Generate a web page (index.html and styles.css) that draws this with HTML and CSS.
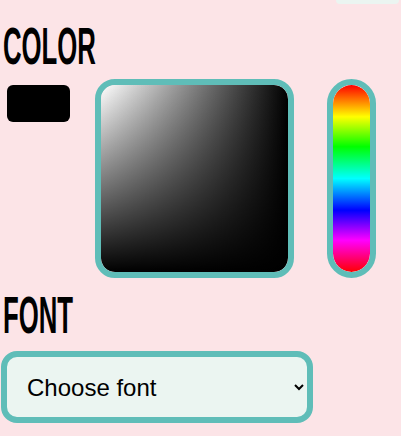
FILE: index.html
```html
<!DOCTYPE html>
<html>
<head>
<meta charset="utf-8">
<link rel="stylesheet" href="styles.css">
</head>
<body>
<div class="topbar"><div class="top-btn"></div></div>
<h2 class="heading"><span>Color</span></h2>
<div class="color-row">
  <div class="swatch"></div>
  <div class="sv-box"><div class="sv-inner"></div></div>
  <div class="hue-box"><div class="hue-inner"></div></div>
</div>
<h2 class="heading heading-font"><span>Font</span></h2>
<select class="font-select">
  <option>Choose font</option>
  <option>Arial</option>
  <option>Georgia</option>
</select>
</body>
</html>
```
FILE: styles.css
```css
html, body {
  margin: 0;
  padding: 0;
  background: #fce4e7;
  overflow: hidden;
}
body {
  font-family: "Liberation Sans", Arial, sans-serif;
}
.topbar {
  height: 4px;
  display: flex;
  justify-content: flex-end;
  padding-right: 2px;
}
.top-btn {
  width: 63px;
  height: 4px;
  background: #ebf5f1;
  border-radius: 0 0 6px 6px;
}
.heading {
  margin: 17px 0 0 3px;
  font-family: "Liberation Sans", sans-serif;
  font-weight: 700;
  font-size: 52px;
  line-height: 50px;
  height: 49px;
  text-transform: uppercase;
  color: #000;
}
.heading span {
  display: inline-block;
  transform: scaleX(0.495);
  transform-origin: left center;
}
.color-row {
  margin-top: 9px;
  display: flex;
  align-items: flex-start;
  padding-left: 7px;
}
.swatch {
  width: 63px;
  height: 37px;
  margin-top: 6px;
  background: #000;
  border-radius: 6px;
}
.sv-box {
  margin-left: 25px;
  width: 199px;
  height: 199px;
  box-sizing: border-box;
  border: 6px solid #5fbdb8;
  border-radius: 20px;
  overflow: hidden;
}
.sv-inner {
  width: 100%;
  height: 100%;
  border-radius: 14px;
  background:
    linear-gradient(to top, #000, rgba(0,0,0,0)),
    linear-gradient(to right, #fff, #000);
}
.hue-box {
  margin-left: 33px;
  width: 49px;
  height: 199px;
  box-sizing: border-box;
  border: 6px solid #5fbdb8;
  border-radius: 25px;
  overflow: hidden;
}
.hue-inner {
  width: 100%;
  height: 100%;
  border-radius: 19px;
  background: linear-gradient(to bottom, #f00 0%, #ff0 17%, #0f0 33%, #0ff 50%, #00f 67%, #f0f 83%, #f00 100%);
}
.heading-font {
  margin-top: 12px;
}
.font-select {
  display: block;
  margin: 12px 0 0 1px;
  width: 312px;
  height: 72px;
  box-sizing: border-box;
  border: 6px solid #5fbdb8;
  border-radius: 16px;
  background-color: #ebf5f1;
  font-family: "Liberation Sans", Arial, sans-serif;
  font-size: 24px;
  color: #000;
  padding: 0 10px 0 16px;
  outline: none;
}
```
